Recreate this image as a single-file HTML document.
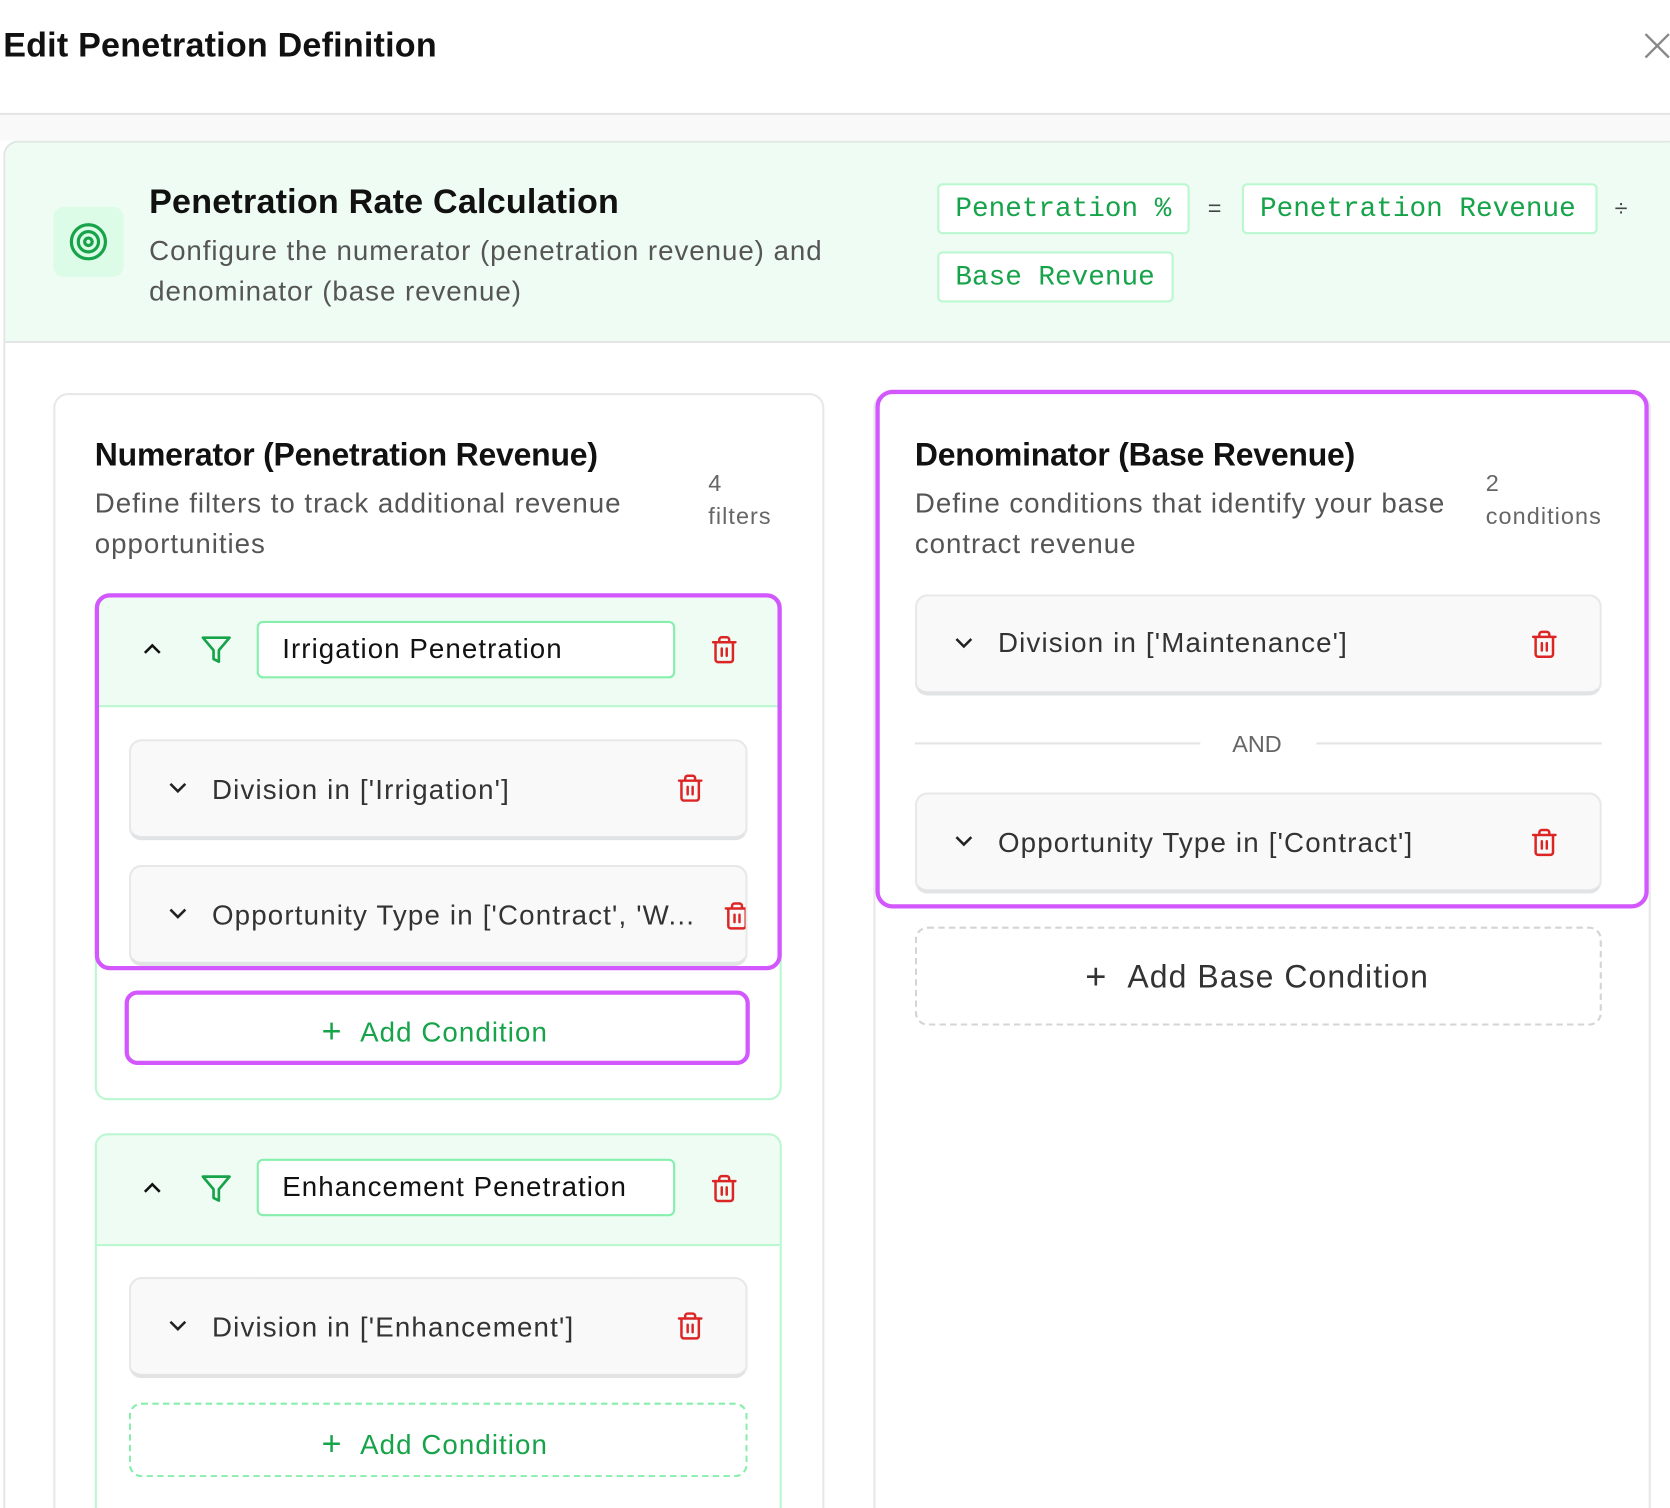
<!DOCTYPE html>
<html><head><meta charset="utf-8"><style>
*{box-sizing:border-box;margin:0;padding:0}
html,body{width:1670px;height:1508px;overflow:hidden;background:#fff}
#w{position:absolute;left:0;top:0;width:1568px;height:1416px;overflow:hidden;transform:scale(1.06505);transform-origin:0 0;font-family:"Liberation Sans",sans-serif;color:#111}
.a{position:absolute}
.t{position:absolute;white-space:nowrap}
.mono{font-family:"Liberation Mono",monospace;color:#16a34a;font-size:26px}
.chip{position:absolute;background:#fff;border:2px solid #bbf7d0;border-radius:5px;height:48px;line-height:44px;padding-left:15px}
.cond{position:absolute;background:#f9f9f9;border:2px solid #e8e8e8;border-bottom:4px solid #e2e3e5;border-radius:12px;height:95px}
.ct{position:absolute;top:30px;font-size:26px;color:#333;white-space:nowrap;letter-spacing:1.1px}
.d{letter-spacing:0.9px}
svg{position:absolute}
</style></head><body><div id="w">
<div class="t" style="left:3px;top:24px;font-size:32px;font-weight:bold;letter-spacing:0.2px">Edit Penetration Definition</div>
<svg style="left:1543px;top:30px" width="26" height="26" viewBox="0 0 26 26"><path d="M2 2L24 24M24 2L2 24" stroke="#888" stroke-width="2.2"/></svg>
<div class="a" style="left:0;top:106px;width:1568px;height:2px;background:#e5e5e5"></div>
<div class="a" style="left:0;top:108px;width:1568px;height:24px;background:#f9f9f9"></div>
<div class="a" style="left:3px;top:132px;width:1600px;height:1300px;border-left:2px solid #e5e5e5;border-top:2px solid #dfe8e2;border-top-left-radius:14px"></div>
<div class="a" style="left:5px;top:134px;width:1600px;height:188px;background:#effcf4;border-bottom:2px solid #e3e6e4;border-top-left-radius:12px"></div>
<div class="a" style="left:50px;top:194px;width:66px;height:66px;background:#dcfce7;border-radius:10px"></div>
<svg style="left:64px;top:208px" width="38" height="38" viewBox="0 0 38 38" fill="none" stroke="#16a34a" stroke-width="3"><circle cx="19" cy="19" r="16"/><circle cx="19" cy="19" r="9.5"/><circle cx="19" cy="19" r="3.5"/></svg>
<div class="t" style="left:140px;top:171px;font-size:32px;font-weight:bold;letter-spacing:0.2px">Penetration Rate Calculation</div>
<div class="t d" style="left:140px;top:216px;font-size:26px;color:#555;line-height:38px">Configure the numerator (penetration revenue) and<br>denominator (base revenue)</div>
<div class="chip mono" style="left:880px;top:172px;width:237px">Penetration %</div>
<div class="t" style="left:1134px;top:183px;font-size:22px;color:#444">=</div>
<div class="chip mono" style="left:1166px;top:172px;width:334px">Penetration Revenue</div>
<div class="t" style="left:1516px;top:183px;font-size:22px;color:#444">÷</div>
<div class="chip mono" style="left:880px;top:236px;width:222px">Base Revenue</div>

<!-- numerator -->
<div class="a" style="left:50px;top:369px;width:724px;height:1100px;border:2px solid #e8e8e8;border-radius:14px"></div>
<div class="t" style="left:89px;top:411px;font-size:30px;font-weight:bold;letter-spacing:-0.2px">Numerator (Penetration Revenue)</div>
<div class="t d" style="left:89px;top:453px;font-size:26px;color:#555;line-height:38px">Define filters to track additional revenue<br>opportunities</div>
<div class="t" style="left:665px;top:438px;font-size:22px;color:#666;line-height:31px;letter-spacing:1px">4<br>filters</div>

<div class="a" style="left:89px;top:558px;width:645px;height:475px;border:2px solid #bbf7d0;border-radius:12px;overflow:hidden"><div class="a" style="left:0;top:0;width:645px;height:104px;background:#effcf4;border-bottom:2px solid #bbf7d0"></div></div>
<svg style="left:133px;top:601px" width="20" height="16" viewBox="0 0 20 16"><path d="M3 12L10 5L17 12" fill="none" stroke="#111" stroke-width="2.4"/></svg>
<svg style="left:188px;top:595px" width="30" height="30" viewBox="0 0 24 24" fill="none" stroke="#16a34a" stroke-width="2" stroke-linejoin="round"><path d="M22 3H2l8 9.46V19l4 2v-8.54L22 3z"/></svg>
<div class="a" style="left:241px;top:583px;width:393px;height:54px;background:#fff;border:2px solid #86efac;border-radius:6px"></div>
<div class="t" style="left:265px;top:594px;font-size:26px;color:#111;letter-spacing:1px">Irrigation Penetration</div>
<svg style="left:666px;top:595px" width="28" height="30" viewBox="0 0 24 24" fill="none" stroke="#dc2626" stroke-width="2" stroke-linecap="round"><path d="M3 6h18M19 6v14a2 2 0 0 1-2 2H7a2 2 0 0 1-2-2V6M8 6V4a2 2 0 0 1 2-2h4a2 2 0 0 1 2 2v2M10 11v6M14 11v6"/></svg>

<div class="cond" style="left:121px;top:694px;width:581px"><div class="ct" style="left:76px">Division in ['Irrigation']</div></div>
<svg style="left:157px;top:732px" width="20" height="16" viewBox="0 0 20 16"><path d="M3 4L10 11L17 4" fill="none" stroke="#222" stroke-width="2.4"/></svg>
<svg style="left:634px;top:725px" width="28" height="30" viewBox="0 0 24 24" fill="none" stroke="#dc2626" stroke-width="2" stroke-linecap="round"><path d="M3 6h18M19 6v14a2 2 0 0 1-2 2H7a2 2 0 0 1-2-2V6M8 6V4a2 2 0 0 1 2-2h4a2 2 0 0 1 2 2v2M10 11v6M14 11v6"/></svg>
<div class="cond" style="left:121px;top:812px;width:581px;overflow:hidden"><div class="ct" style="left:76px">Opportunity Type in ['Contract', 'W...</div>
<svg style="left:555px;top:31px" width="28" height="30" viewBox="0 0 24 24" fill="none" stroke="#dc2626" stroke-width="2" stroke-linecap="round"><path d="M3 6h18M19 6v14a2 2 0 0 1-2 2H7a2 2 0 0 1-2-2V6M8 6V4a2 2 0 0 1 2-2h4a2 2 0 0 1 2 2v2M10 11v6M14 11v6"/></svg></div>
<svg style="left:157px;top:850px" width="20" height="16" viewBox="0 0 20 16"><path d="M3 4L10 11L17 4" fill="none" stroke="#222" stroke-width="2.4"/></svg>
<div class="a" style="left:89px;top:557px;width:645px;height:354px;border:4px solid #d357fe;border-radius:14px"></div>

<div class="a" style="left:117px;top:930px;width:587px;height:70px;border:4px solid #d357fe;border-radius:12px;background:#fff"></div>
<div class="t" style="left:302px;top:949px;font-size:26px;color:#16a34a;letter-spacing:1px"><span style="font-size:32px;position:relative;top:1px">+</span>&nbsp;&nbsp;Add Condition</div>

<div class="a" style="left:89px;top:1064px;width:645px;height:400px;border:2px solid #bbf7d0;border-radius:12px;overflow:hidden"><div class="a" style="left:0;top:0;width:645px;height:104px;background:#effcf4;border-bottom:2px solid #bbf7d0"></div></div>
<svg style="left:133px;top:1107px" width="20" height="16" viewBox="0 0 20 16"><path d="M3 12L10 5L17 12" fill="none" stroke="#111" stroke-width="2.4"/></svg>
<svg style="left:188px;top:1101px" width="30" height="30" viewBox="0 0 24 24" fill="none" stroke="#16a34a" stroke-width="2" stroke-linejoin="round"><path d="M22 3H2l8 9.46V19l4 2v-8.54L22 3z"/></svg>
<div class="a" style="left:241px;top:1088px;width:393px;height:54px;background:#fff;border:2px solid #86efac;border-radius:6px"></div>
<div class="t" style="left:265px;top:1099px;font-size:26px;color:#111;letter-spacing:1px">Enhancement Penetration</div>
<svg style="left:666px;top:1101px" width="28" height="30" viewBox="0 0 24 24" fill="none" stroke="#dc2626" stroke-width="2" stroke-linecap="round"><path d="M3 6h18M19 6v14a2 2 0 0 1-2 2H7a2 2 0 0 1-2-2V6M8 6V4a2 2 0 0 1 2-2h4a2 2 0 0 1 2 2v2M10 11v6M14 11v6"/></svg>
<div class="cond" style="left:121px;top:1199px;width:581px"><div class="ct" style="left:76px">Division in ['Enhancement']</div></div>
<svg style="left:157px;top:1237px" width="20" height="16" viewBox="0 0 20 16"><path d="M3 4L10 11L17 4" fill="none" stroke="#222" stroke-width="2.4"/></svg>
<svg style="left:634px;top:1230px" width="28" height="30" viewBox="0 0 24 24" fill="none" stroke="#dc2626" stroke-width="2" stroke-linecap="round"><path d="M3 6h18M19 6v14a2 2 0 0 1-2 2H7a2 2 0 0 1-2-2V6M8 6V4a2 2 0 0 1 2-2h4a2 2 0 0 1 2 2v2M10 11v6M14 11v6"/></svg>
<div class="a" style="left:121px;top:1317px;width:581px;height:70px;border:2px dashed #86efac;border-radius:12px"></div>
<div class="t" style="left:302px;top:1336px;font-size:26px;color:#16a34a;letter-spacing:1px"><span style="font-size:32px;position:relative;top:1px">+</span>&nbsp;&nbsp;Add Condition</div>

<!-- denominator -->
<div class="a" style="left:820px;top:369px;width:730px;height:1100px;border:2px solid #e8e8e8;border-radius:14px"></div>
<div class="a" style="left:822px;top:366px;width:726px;height:487px;border:4px solid #d357fe;border-radius:16px;background:#fff"></div>
<div class="t" style="left:859px;top:411px;font-size:30px;font-weight:bold;letter-spacing:-0.2px">Denominator (Base Revenue)</div>
<div class="t d" style="left:859px;top:453px;font-size:26px;color:#555;line-height:38px">Define conditions that identify your base<br>contract revenue</div>
<div class="t" style="left:1395px;top:438px;font-size:22px;color:#666;line-height:31px;letter-spacing:1px">2<br>conditions</div>
<div class="cond" style="left:859px;top:558px;width:645px"><div class="ct" style="left:76px;top:28px">Division in ['Maintenance']</div></div>
<svg style="left:895px;top:596px" width="20" height="16" viewBox="0 0 20 16"><path d="M3 4L10 11L17 4" fill="none" stroke="#222" stroke-width="2.4"/></svg>
<svg style="left:1436px;top:590px" width="28" height="30" viewBox="0 0 24 24" fill="none" stroke="#dc2626" stroke-width="2" stroke-linecap="round"><path d="M3 6h18M19 6v14a2 2 0 0 1-2 2H7a2 2 0 0 1-2-2V6M8 6V4a2 2 0 0 1 2-2h4a2 2 0 0 1 2 2v2M10 11v6M14 11v6"/></svg>
<div class="a" style="left:859px;top:697px;width:268px;height:2px;background:#e5e5e5"></div>
<div class="a" style="left:1236px;top:697px;width:268px;height:2px;background:#e5e5e5"></div>
<div class="t" style="left:1157px;top:686px;font-size:22px;color:#666">AND</div>
<div class="cond" style="left:859px;top:744px;width:645px"><div class="ct" style="left:76px;top:30px">Opportunity Type in ['Contract']</div></div>
<svg style="left:895px;top:782px" width="20" height="16" viewBox="0 0 20 16"><path d="M3 4L10 11L17 4" fill="none" stroke="#222" stroke-width="2.4"/></svg>
<svg style="left:1436px;top:776px" width="28" height="30" viewBox="0 0 24 24" fill="none" stroke="#dc2626" stroke-width="2" stroke-linecap="round"><path d="M3 6h18M19 6v14a2 2 0 0 1-2 2H7a2 2 0 0 1-2-2V6M8 6V4a2 2 0 0 1 2-2h4a2 2 0 0 1 2 2v2M10 11v6M14 11v6"/></svg>
<div class="a" style="left:859px;top:870px;width:645px;height:93px;border:2px dashed #d4d4d4;border-radius:12px"></div>
<div class="t" style="left:1019px;top:897px;font-size:30px;color:#333;letter-spacing:1px"><span style="font-size:34px;position:relative;top:1px">+</span>&nbsp;&nbsp;Add Base Condition</div>
</div></body></html>
